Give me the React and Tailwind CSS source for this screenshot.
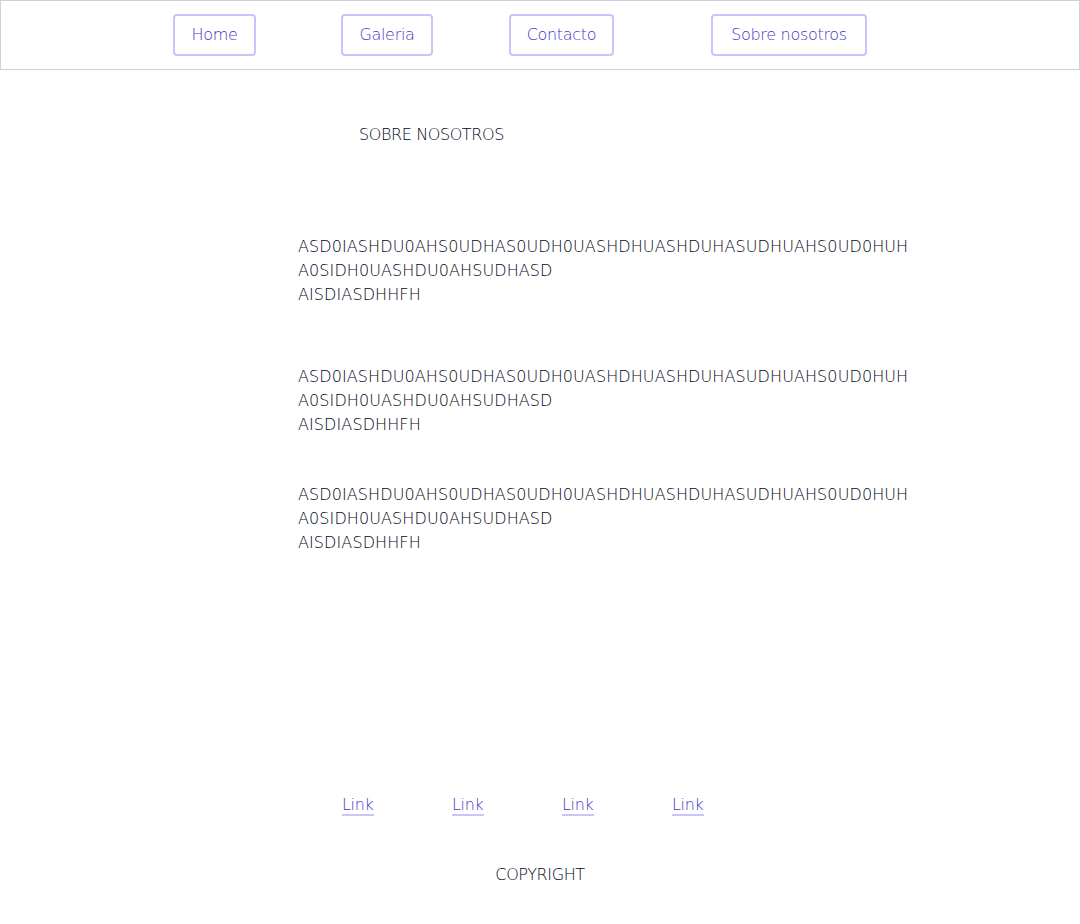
import React from "react";

const font = { fontFamily: '"DejaVu Sans", sans-serif' };

const navItems = [
  { label: "Home", cls: "ml-[172px] w-[83px]" },
  { label: "Galeria", cls: "ml-[85px] w-[92px]" },
  { label: "Contacto", cls: "ml-[76px] w-[105px]" },
  { label: "Sobre nosotros", cls: "ml-[97px] w-[156px]" },
];

const Para = ({ className = "" }) => (
  <p className={"text-[16px] leading-[24px] tracking-[0.1px] font-extralight text-[#020617] " + className}>
    ASD0IASHDU0AHS0UDHAS0UDH0UASHDHUASHDUHASUDHUAHS0UD0HUH
    <br />
    A0SIDH0UASHDU0AHSUDHASD
    <br />
    AISDIASDHHFH
  </p>
);

export default function App() {
  return (
    <div className="min-h-[924px] bg-white" style={font}>
      <header className="h-[70px] border border-[#c8d3de] flex items-center">
        {navItems.map((n) => (
          <a
            key={n.label}
            href="#"
            className={`${n.cls} h-[42px] flex items-center justify-center border-2 border-[#c9c5fb] rounded-[4px] text-[16px] font-extralight tracking-[-0.3px] text-[#4338ca]`}
          >
            {n.label}
          </a>
        ))}
      </header>

      <main className="pl-[298px]">
        <h1 className="pl-[61px] pt-[53px] text-[16px] leading-[24px] tracking-[-0.4px] font-extralight text-[#020617]">
          SOBRE NOSOTROS
        </h1>
        <Para className="mt-[88px]" />
        <Para className="mt-[58px]" />
        <Para className="mt-[46px]" />
      </main>

      <footer>
        <nav className="flex pl-[342px] mt-[238px]">
          {[1, 2, 3, 4].map((i) => (
            <div key={i} className="w-[110px]">
              <a
                href="#"
                className="text-[16px] leading-[20px] font-extralight tracking-[-0.3px] text-[#4338ca] border-b-2 border-[#c9c5fb]"
              >
                Link
              </a>
            </div>
          ))}
        </nav>
        <p className="mt-[46px] text-center text-[16px] leading-[24px] tracking-[-0.4px] font-extralight text-[#020617]">
          COPYRIGHT
        </p>
      </footer>
    </div>
  );
}
